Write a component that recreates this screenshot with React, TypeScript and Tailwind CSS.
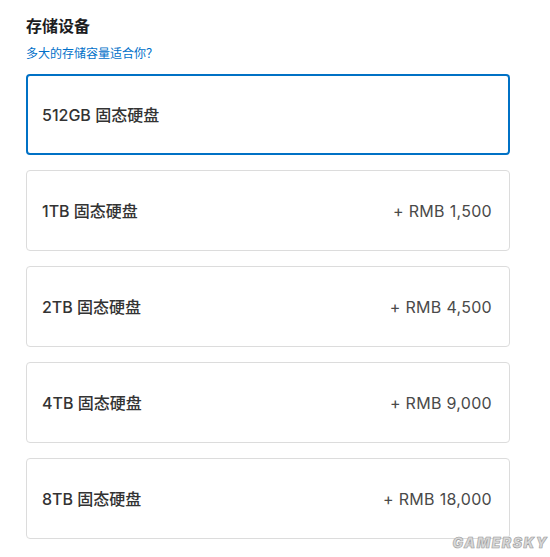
import React from "react";

const options = [
  { label: "512GB 固态硬盘", price: "" },
  { label: "1TB 固态硬盘", price: "+ RMB 1,500" },
  { label: "2TB 固态硬盘", price: "+ RMB 4,500" },
  { label: "4TB 固态硬盘", price: "+ RMB 9,000" },
  { label: "8TB 固态硬盘", price: "+ RMB 18,000" },
];

export default function App() {
  return (
    <div
      className="relative w-[550px] h-[557px] bg-white overflow-hidden"
      style={{ fontFamily: 'Inter, "Noto Sans CJK SC", sans-serif' }}
    >
      <div className="pl-[26px] pt-[16px] w-[510px]">
        {/* Heading */}
        <h2 className="text-[16px] leading-[20px] font-bold text-[#1d1d1f]">存储设备</h2>
        <a className="block mt-[10px] text-[12px] leading-[15px] text-[#0070c9]">
          多大的存储容量适合你？
        </a>

        {/* Options */}
        <div className="mt-[13px] flex flex-col gap-[15px]">
          {options.map((o, i) => (
            <div
              key={o.label}
              className={
                i === 0
                  ? "h-[81px] rounded-[4px] border-2 border-[#0071c5] flex items-center justify-between pl-[14px] pr-[16px]"
                  : "h-[81px] rounded-[4px] border border-[#dcdcdc] flex items-center justify-between pl-[15px] pr-[17px]"
              }
            >
              <span className="text-[16px] font-medium text-[#333]">{o.label}</span>
              <span className="text-[16px] tracking-[0.3px] text-[#4a4a4a]">{o.price}</span>
            </div>
          ))}
        </div>
      </div>

      {/* Watermark */}
      <span
        className="absolute right-[2px] bottom-[4px] text-[14px] font-black italic tracking-[1.5px] text-[#d8d8d8]"
        style={{ WebkitTextStroke: "0.6px #9a9a9a" }}
      >
        GAMERSKY
      </span>
    </div>
  );
}
